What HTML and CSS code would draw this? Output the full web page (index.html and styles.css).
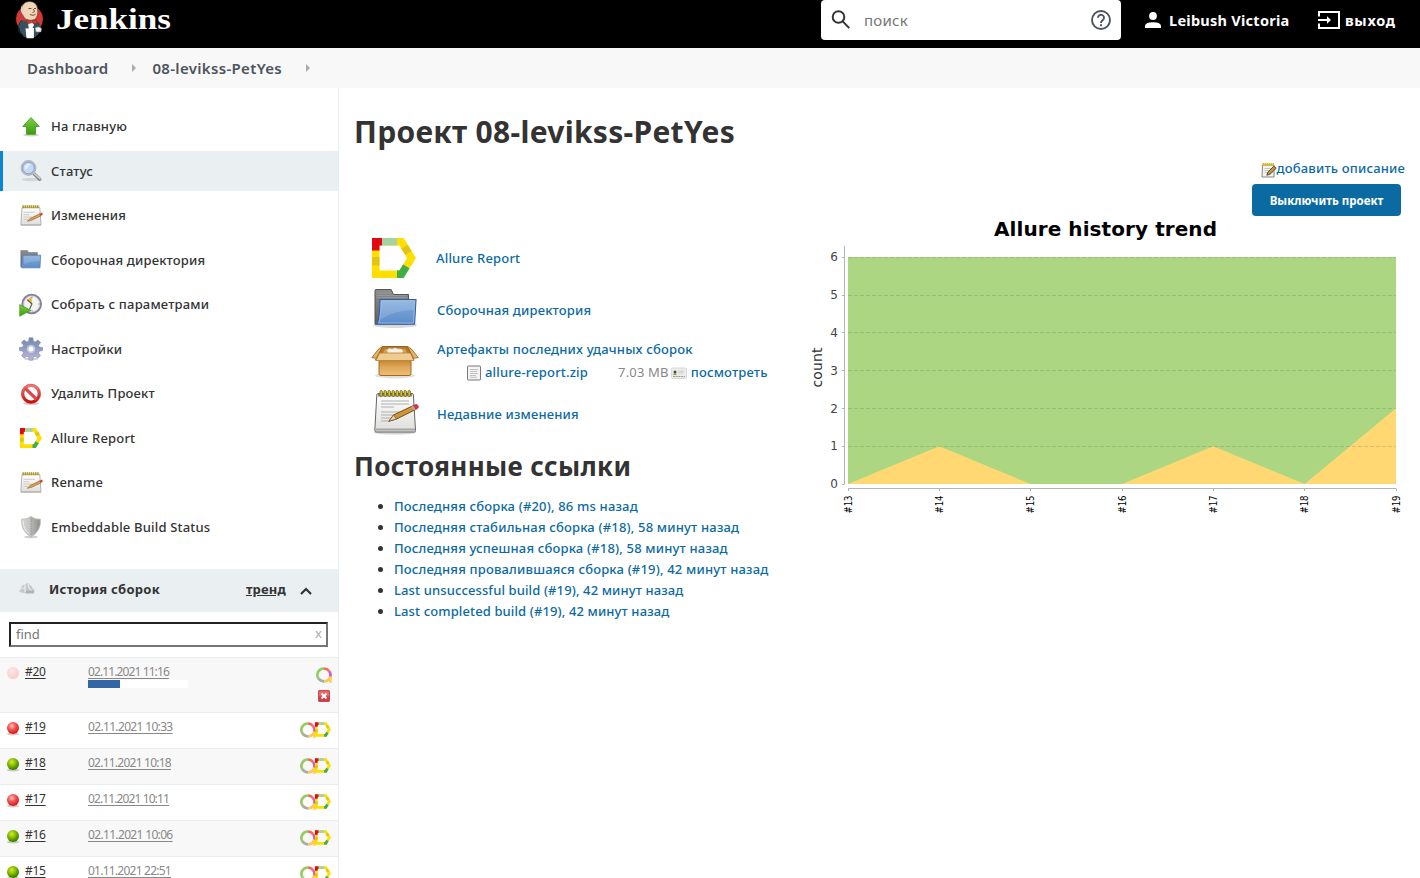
FILE: index.html
```html
<!DOCTYPE html>
<html lang="ru">
<head>
<meta charset="utf-8">
<title>08-levikss-PetYes [Jenkins]</title>
<link rel="stylesheet" href="styles.css">
</head>
<body>
<svg class="sprite" aria-hidden="true">
  <defs>
    <linearGradient id="gGreen" x1="0" y1="0" x2="0" y2="1"><stop offset="0" stop-color="#7ed04a"/><stop offset="1" stop-color="#3d9a0c"/></linearGradient>
    <linearGradient id="gBlue" x1="0" y1="0" x2="0" y2="1"><stop offset="0" stop-color="#86aedd"/><stop offset="1" stop-color="#5b8bc9"/></linearGradient>
    <linearGradient id="gGrey" x1="0" y1="0" x2="0" y2="1"><stop offset="0" stop-color="#8e8e8e"/><stop offset="1" stop-color="#606060"/></linearGradient>
    <linearGradient id="gPaper" x1="0" y1="0" x2="0" y2="1"><stop offset="0" stop-color="#ffffff"/><stop offset="1" stop-color="#dededc"/></linearGradient>
    <linearGradient id="gBox" x1="0" y1="0" x2="0" y2="1"><stop offset="0" stop-color="#bd8129"/><stop offset=".5" stop-color="#dfa75a"/><stop offset="1" stop-color="#efc078"/></linearGradient>
    <linearGradient id="gRed" x1="0" y1="0" x2="0" y2="1"><stop offset="0" stop-color="#ea7a7a"/><stop offset="1" stop-color="#cf0c0c"/></linearGradient>
    <linearGradient id="gGear" x1="0" y1="0" x2="0" y2="1"><stop offset="0" stop-color="#6f87b0"/><stop offset="1" stop-color="#bdb4da"/></linearGradient>
    <linearGradient id="gShield" x1="0" y1="0" x2="1" y2="0"><stop offset="0" stop-color="#d5d5d3"/><stop offset=".5" stop-color="#c2c2c0"/><stop offset=".52" stop-color="#b4b4b1"/><stop offset="1" stop-color="#8e8e8c"/></linearGradient>
    <radialGradient id="bRed" cx=".4" cy=".33" r=".65"><stop offset="0" stop-color="#ffc4c4"/><stop offset=".45" stop-color="#f65a5a"/><stop offset="1" stop-color="#d91919"/></radialGradient>
    <radialGradient id="bGreen" cx=".4" cy=".33" r=".65"><stop offset="0" stop-color="#d6ea30"/><stop offset=".5" stop-color="#86bd00"/><stop offset="1" stop-color="#357d00"/></radialGradient>
    <radialGradient id="bPale" cx=".4" cy=".35" r=".65"><stop offset="0" stop-color="#ffe6e6"/><stop offset="1" stop-color="#f8cccc"/></radialGradient>
  </defs>
  <symbol id="up" viewBox="0 0 24 24">
    <ellipse cx="12" cy="20" rx="8" ry="1.5" fill="#000" opacity=".18"/>
    <path d="M12 2.500 20.300 11.500H16.500V19.300H7.500V11.500H3.700Z" fill="url(#gGreen)" stroke="#4aa01f" stroke-width=".9"/>
  </symbol>
  <symbol id="search" viewBox="0 0 24 24">
    <ellipse cx="12" cy="20.5" rx="9" ry="1.8" fill="#000" opacity=".1"/>
    <path d="M15 14.8 20.8 20.2" stroke="#808080" stroke-width="3.4" stroke-linecap="round"/>
    <path d="M15 14.3 21 19.7" stroke="#cfcfcf" stroke-width="1.6" stroke-linecap="round"/>
    <circle cx="9.5" cy="9" r="7" fill="#b8d3f2" stroke="#b9b9b9" stroke-width="1.9"/>
    <circle cx="9.5" cy="9" r="5.8" fill="#c4daf5" stroke="#7ca2d6" stroke-width="1"/>
    <path d="M5.500 9.500a4.400 4.400 0 0 1 6-4.300L7 10.500Z" fill="#eef5fd" opacity=".8"/>
  </symbol>
  <symbol id="notes" viewBox="0 0 24 24">
    <rect x="2" y="20.2" width="20" height="1.8" fill="#aaa" opacity=".6"/>
    <path d="M3 3.6H20.8L22 20.8H1.8Z" fill="url(#gPaper)" stroke="#a2a2a2" stroke-width=".8"/>
    <path d="M3.4 2.8H20.4" stroke="#ab9524" stroke-width="3" stroke-dasharray="1.5 .6"/>
    <path d="M4.5 8.3H16M4.5 10.7H10M4.5 13.1H13M4.5 15.5H9" stroke="#c8c8c8" stroke-width=".9"/>
    <path d="M8.3 17.3 11.5 14.3 20.8 9.8 22 11.8 12.6 16.3Z" fill="#d9a050" stroke="#8a6020" stroke-width=".6"/>
    <path d="M20.5 9.7 23.3 8.6 23.7 10.7 22 11.8Z" fill="#d83a35"/>
  </symbol>
  <symbol id="folder" viewBox="0 0 24 24">
    <path d="M1.8 18.800V2.600H8.400L9.500 4.500H18.400V18.800Z" fill="url(#gGrey)" stroke="#777" stroke-width=".6"/>
    <path d="M3.8 7.200H21.600L21 19.800H2.600Z" fill="url(#gBlue)" stroke="#5580ba" stroke-width=".8"/>
    <path d="M4.9 8.300H21.100L20.900 13Q13 12.600 5 16Z" fill="#fff" opacity=".14"/>
  </symbol>
  <symbol id="clock" viewBox="0 0 24 24">
    <circle cx="12.700" cy="11" r="9.3" fill="#f4f3ee" stroke="#85809b" stroke-width="2"/>
    <circle cx="12.700" cy="11" r="8" fill="none" stroke="#c7c4d2" stroke-width=".7"/>
    <path d="M8.2 7.2 12.8 10.8V3.5A8 8 0 0 0 8.2 7.2Z" fill="#e5bd42"/>
    <path d="M8 6.7 13 11 10.6 16" fill="none" stroke="#555" stroke-width="1.1"/>
    <path d="M13 3.7V5M13 17V18.5M19 11H20.4" stroke="#999"/>
    <path d="M.7 11.5 12 17.3.7 23.3Z" fill="url(#gGreen)" stroke="#379315" stroke-width=".6"/>
  </symbol>
  <symbol id="gear" viewBox="0 0 24 24">
    <ellipse cx="12" cy="22" rx="7" ry="1.3" fill="#000" opacity=".18"/>
    <path fill="url(#gGear)" stroke="#7183a4" stroke-width=".5" fill-rule="evenodd" d="M10.100.8H13.900L14.400 4.200 16.200 5 19 2.900 21.600 5.500 19.500 8.300 20.200 10.100 23.700 10.600V13.600L20.200 14.200 19.500 16 21.500 18.800 18.800 21.300 16.100 19.300 14.300 20 13.700 23.200H10.300L9.700 20 7.900 19.300 5.200 21.300 2.500 18.800 4.500 16 3.800 14.200.3 13.600V10.600L3.800 10.100 4.500 8.300 2.400 5.500 5 2.900 7.800 5 9.600 4.200ZM12 8.800A3.200 3.200 0 1 0 12 15.200 3.200 3.200 0 1 0 12 8.800Z"/>
    <circle cx="12" cy="12" r="3.8" fill="none" stroke="#d9dbec" stroke-width=".8"/>
  </symbol>
  <symbol id="stop" viewBox="0 0 24 24">
    <ellipse cx="12" cy="21.500" rx="8" ry="1.300" fill="#000" opacity=".2"/>
    <circle cx="12" cy="11.800" r="8.200" fill="#fff" stroke="url(#gRed)" stroke-width="3"/>
    <path d="M6.300 6.300 17.600 17.300" stroke="#dc4646" stroke-width="3.200"/>
    <circle cx="12" cy="11.800" r="9.700" fill="none" stroke="#c52b2b" stroke-width=".5"/>
  </symbol>
  <symbol id="allure" viewBox="0 0 44 40">
    <g fill="none" stroke-width="7.500">
      <path d="M3.750 3.750H29.500L39.500 20 29.500 36.250H3.750Z" stroke="#ffde00"/>
      <path d="M3.750 19V27.500M32.500 8.600 36.400 15" stroke="#e3c50f"/>
      <path d="M3.750 12.500V3.750H10" stroke="#e30613"/>
      <path d="M10 3.750H25" stroke="#a5d2a5"/>
      <path d="M25 36.250H29.500L34.300 28.400" stroke="#3fae49"/>
    </g>
  </symbol>
  <symbol id="shield" viewBox="0 0 24 24">
    <ellipse cx="12" cy="22" rx="7" ry="1.3" fill="#000" opacity=".18"/>
    <path d="M12 1.5Q15.5 4.5 21.3 4.2 22.600 15.500 12 22 1.400 15.500 2.700 4.200 8.500 4.500 12 1.500Z" fill="url(#gShield)" stroke="#b4b4b2" stroke-width=".8"/>
    <path d="M12 3V20.5" stroke="#8d8d8b" stroke-width=".8" stroke-dasharray="1.5 1"/>
    <path d="M4 5.6Q4 14 10 18.700" fill="none" stroke="#f2f2f0" stroke-width=".9"/>
  </symbol>
  <symbol id="folderL" viewBox="0 0 48 48">
    <ellipse cx="24" cy="40" rx="22" ry="3" fill="#000" opacity=".15"/>
    <path d="M4 39V5.500Q4 4.500 5 4.500H20.200L22.500 9.500H37.500V39Z" fill="url(#gGrey)" stroke="#555" stroke-width="1"/>
    <path d="M5.500 8H20.500M5.500 10.500H36M5.500 12.500H36" stroke="#a2a2a2" stroke-width=".6"/>
    <path d="M9 14.500H45L43.600 39.200H5.400Q8.400 37 9 14.500Z" fill="url(#gBlue)" stroke="#34619f" stroke-width="1.1"/>
    <path d="M10.500 16H43.500L43 25Q23 25 9.500 34.500Z" fill="#fff" opacity=".15"/>
    <path d="M10.200 15.800H43.700L42.500 38H7.700Q9.800 33 10.200 15.800Z" fill="none" stroke="#a7c4e8" stroke-width=".7"/>
  </symbol>
  <symbol id="box" viewBox="0 0 48 48">
    <ellipse cx="24" cy="38.500" rx="20" ry="3" fill="#000" opacity=".12"/>
    <path d="M8 22H40V36.500Q40 38.500 38 38.500H10Q8 38.500 8 36.500Z" fill="url(#gBox)" stroke="#a4681b" stroke-width="1"/>
    <path d="M11.500 9.500H36.500L43 23H4.500Z" fill="#b27a2a" stroke="#9b6217"/>
    <path d="M14 12H34L37 17H11Z" fill="#d5a050"/>
    <path d="M16 13Q18 10 21 12 24 10 27 12 31 11 32 14L31 16.500H17Z" fill="#f4f1e8" stroke="#cfc7b2" stroke-width=".5"/>
    <path d="M8.500 16H39.500L42.800 23.500H4.800Z" fill="#efcb94" stroke="#bc822f" stroke-width=".8"/>
    <path d="M11.500 9.500 7.500 12 .8 20.700 5.400 21.200ZM36.500 9.500 40.500 12 47.400 20.700 42.600 21.200Z" fill="#e6b56c" stroke="#9b6217" stroke-width=".8"/>
  </symbol>
  <symbol id="notesL" viewBox="0 0 48 48">
    <ellipse cx="24" cy="43.500" rx="21" ry="2" fill="#000" opacity=".17"/>
    <path d="M7 4.500H41Q42.300 4.500 42.400 6L44.500 41.500Q44.500 43 43.500 43H5Q3.800 43 3.800 41.500L5.800 6Q5.900 4.500 7 4.500Z" fill="url(#gPaper)" stroke="#656565" stroke-width="1"/>
    <path d="M7 5H41V7.500H7Z" fill="#8c8c8c"/>
    <path d="M4.500 40.400H44" stroke="#a5a5a5" stroke-width="2"/>
    <g fill="#e0cd35" stroke="#66560a" stroke-width=".8"><rect x="9" y="1.500" width="2.400" height="6" rx="1.200"/><rect x="13" y="1.500" width="2.400" height="6" rx="1.200"/><rect x="17" y="1.500" width="2.400" height="6" rx="1.200"/><rect x="21" y="1.500" width="2.400" height="6" rx="1.200"/><rect x="25" y="1.500" width="2.400" height="6" rx="1.200"/><rect x="29" y="1.500" width="2.400" height="6" rx="1.200"/><rect x="33" y="1.500" width="2.400" height="6" rx="1.200"/><rect x="37" y="1.500" width="2.400" height="6" rx="1.200"/></g>
    <path d="M10 12H38M10 15H38M10 18H23M10 23H34M10 26H28M10 29H22M10 32H17" stroke="#aeb0ae" stroke-width="1"/>
    <path d="M17.800 32.300 22.500 26 42.500 16.500 44.700 20.500 25.500 30Z" fill="#d0953a" stroke="#65430e" stroke-width=".9"/>
    <path d="M17.800 32.300 22.500 26 25.500 30Z" fill="#ecd3a7" stroke="#65430e" stroke-width=".6"/>
    <path d="M42 16.500 45.500 15.300Q48 16.500 47.200 19L44.500 20.700Z" fill="#e0353a" stroke="#8b2323" stroke-width=".5"/>
    <path d="M40.500 17.200 42.300 16.400 44.700 20.600 43 21.500Z" fill="#aaa"/>
  </symbol>
  <symbol id="doc" viewBox="0 0 16 16">
    <rect x="1.500" y="1" width="13" height="14" rx=".8" fill="#f4f4f3" stroke="#777" stroke-width="1"/>
    <path d="M4 4.500H12M4 6.500H11M4 8.500H12M4 10.500H10M4 12.300H11" stroke="#b4b4b4" stroke-width=".8"/>
  </symbol>
  <symbol id="card" viewBox="0 0 16 16">
    <rect x=".5" y="3" width="15" height="10.500" rx="1" fill="#ececea" stroke="#d8d8d6"/>
    <circle cx="4" cy="7" r="1.500" fill="#4d4b22"/><path d="M1.800 9.800Q4 7 6 9.800Z" fill="#71872b"/>
    <path d="M7.500 6.300H13M7.500 8H12" stroke="#c0c0c0" stroke-width=".8"/><path d="M2 11.500H14" stroke="#999" stroke-dasharray="2 .7"/>
  </symbol>
  <symbol id="edit" viewBox="0 0 16 16">
    <path d="M1.500 3H13V15H1Z" fill="#f3f3f1" stroke="#777" stroke-width=".9"/>
    <path d="M1.500 2.500H13" stroke="#d6bd1f" stroke-width="3" stroke-dasharray="1.5 .5"/>
    <path d="M3.500 6.500H10M3.500 8.500H8M3.500 10.500H7" stroke="#bbb" stroke-width=".8"/>
    <path d="M5.800 13.300 7 10 12.800 4.200 15.200 6.200 9.300 12Z" fill="#bf954c" stroke="#4d4020" stroke-width=".9"/>
  </symbol>
  <symbol id="trend" viewBox="0 0 16 16">
    <path d="M.5 11Q.3 8.500 2 7.800 3 3 6 3.800 8.500.5 11 4 13 4.300 13.200 7 15.800 8 15.500 11.500L8 12.500Z" fill="#c6c8c9"/>
    <path d="M6 4V11M9 3 10.500 8 15 11M2.500 8 6 6.500" stroke="#eff0f0" stroke-width="1" fill="none"/>
    <path d="M7 9.500H15V12.500H7Z" fill="#b0b2b3"/>
  </symbol>
  <symbol id="ring" viewBox="0 0 16 16">
    <g fill="none" stroke-width="2.700">
      <path d="M8 1.500A6.400 6.400 0 0 0 2.600 11.600" stroke="#97cc64"/>
      <path d="M2.600 11.600A6.400 6.400 0 0 0 8.500 14.300" stroke="#aaa"/>
      <path d="M8.500 14.300A6.400 6.400 0 0 0 14.200 10" stroke="#ffc657"/>
      <path d="M8 1.500A6.400 6.400 0 0 1 13 4" stroke="#fd6650"/>
      <path d="M13 4A6.400 6.400 0 0 1 14.200 10" stroke="#d35ebe"/>
      <path d="M14.500 9.500V15.800" stroke="#ffd050"/>
    </g>
  </symbol>
  <symbol id="ballRed" viewBox="0 0 16 16"><ellipse cx="8" cy="14" rx="6" ry="1.500" fill="#000" opacity=".2"/><circle cx="8" cy="8" r="6" fill="url(#bRed)"/></symbol>
  <symbol id="ballGreen" viewBox="0 0 16 16"><ellipse cx="8" cy="14" rx="6" ry="1.500" fill="#000" opacity=".2"/><circle cx="8" cy="8" r="6" fill="url(#bGreen)"/></symbol>
  <symbol id="ballPale" viewBox="0 0 16 16"><circle cx="8" cy="8" r="6" fill="url(#bPale)"/></symbol>
</svg>

<header class="header">
  <a class="brand">
    <svg class="butler" viewBox="0 0 30 40">
      <circle cx="14.500" cy="19" r="13.400" fill="#d33833"/>
      <path d="M4.500 30Q3.600 22 6.500 20L13 21.500 19 20 24.500 23 26 31 23 34.500 20 37H9L6 33Z" fill="#35505e"/>
      <path d="M6.500 20.500Q2.500 24 4 32L8 35" fill="none" stroke="#1c2a32" stroke-width="1"/>
      <path d="M6.700 13Q5.500 2 14 1.500 22 1.500 22.500 9 23.500 16.500 19.500 19.500 13 21.500 9.500 18Z" fill="#f0d6b7" stroke="#5c4a3e" stroke-width=".6"/>
      <path d="M6.300 12Q5 8 7 5.500L8.400 10 8 15Z" fill="#d9d4c8"/>
      <path d="M13.500 8.500H16.500M19 8.500H21M15 14.500Q18 16.500 20.500 14.300M18 9Q21 12 17.500 12.500" fill="none" stroke="#5c3e32" stroke-width=".9"/>
      <path d="M12.500 21H17L19 25 17 29H14Z" fill="#fff"/>
      <path d="M12 19.500 16.500 21.500 21.500 19.500 21.800 24 16.500 22.800 12.500 24.300Z" fill="#d33833" stroke="#7a1c1a" stroke-width=".4"/>
      <path d="M10.500 28.500 19 28 18.800 38.300H11.500Z" fill="#fff"/>
      <path d="M20 28Q24 25.500 26.500 28.500L26 32H21Z" fill="#f4f1ee" stroke="#6a6a6a" stroke-width=".5"/>
    </svg>
    <svg class="wordmark" viewBox="0 0 118 40"><text x="0" y="28.500" textLength="115" lengthAdjust="spacingAndGlyphs">Jenkins</text></svg>
  </a>
  <div class="search">
    <svg class="search-lens" viewBox="0 0 24 24"><circle cx="9.500" cy="9" r="5.800"/><path d="M13.700 13.400 20.300 20.100"/></svg>
    <span class="search-text">поиск</span>
    <svg class="search-help" viewBox="0 0 24 24"><circle cx="12" cy="12" r="9"/><path d="M9 9.800A3 3 0 1 1 13.800 12.100Q12 13.300 12 15"/><path d="M12 16.300V18.200"/></svg>
  </div>
  <a class="user"><svg class="user-icon" viewBox="0 0 16 16"><circle cx="8" cy="4" r="3.900"/><path d="M0 16V14Q0 10.200 8 10.200 16 10.200 16 14V16Z"/></svg><span>Leibush Victoria</span></a>
  <a class="logout"><svg class="logout-icon" viewBox="0 0 22 20"><path d="M1 6.500V2H21V18H1V13.500"/><path d="M0 10H10"/><path d="M9 6.300 13 10 9 13.700Z" class="tip"/></svg><span>выход</span></a>
</header>

<nav class="crumbs">
  <a>Dashboard</a><i class="crumb-sep"></i><a class="crumb-project">08-levikss-PetYes</a><i class="crumb-sep"></i>
</nav>

<div class="page">
  <aside class="side">
    <ul class="tasks">
      <li class="task"><svg><use href="#up"/></svg><span>На главную</span></li>
      <li class="task active"><svg><use href="#search"/></svg><span>Статус</span></li>
      <li class="task"><svg><use href="#notes"/></svg><span>Изменения</span></li>
      <li class="task"><svg><use href="#folder"/></svg><span>Сборочная директория</span></li>
      <li class="task"><svg><use href="#clock"/></svg><span>Собрать с параметрами</span></li>
      <li class="task"><svg><use href="#gear"/></svg><span>Настройки</span></li>
      <li class="task"><svg><use href="#stop"/></svg><span>Удалить Проект</span></li>
      <li class="task"><svg class="allure-s"><use href="#allure"/></svg><span>Allure Report</span></li>
      <li class="task"><svg><use href="#notes"/></svg><span>Rename</span></li>
      <li class="task"><svg><use href="#shield"/></svg><span>Embeddable Build Status</span></li>
    </ul>
    <section class="history">
      <div class="history-head">
        <svg class="trend-icon"><use href="#trend"/></svg>
        <b class="history-title">История сборок</b>
        <a class="trend-link">тренд</a>
        <svg class="chevron" viewBox="0 0 12 8"><path d="M1 7 6 2 11 7"/></svg>
      </div>
      <div class="find"><span>find</span><span class="find-x">x</span></div>
      <div class="build running">
        <svg class="ball"><use href="#ballPale"/></svg><a class="num">#20</a>
        <div class="when"><a class="date ones">02.11.2021 11:16</a><div class="bar"><div class="bar-fill" style="width:32%"></div></div></div>
        <div class="badges stack"><svg class="badge"><use href="#ring"/></svg><svg class="cancel" viewBox="0 0 12 12"><rect x=".5" y=".5" width="11" height="11" rx=".6" fill="#e06a6e" stroke="#c94a50"/><path d="M1 6.500H11V11H1Z" fill="#d33c42"/><path d="M3.500 3.500 8.500 8.500M8.500 3.500 3.500 8.500" stroke="#fff" stroke-width="1.800"/></svg></div>
      </div>
      <div class="build"><svg class="ball"><use href="#ballRed"/></svg><a class="num">#19</a><div class="when"><a class="date">02.11.2021 10:33</a></div><div class="badges"><svg class="badge"><use href="#ring"/></svg><svg class="badge-a"><use href="#allure"/></svg></div></div>
      <div class="build alt"><svg class="ball"><use href="#ballGreen"/></svg><a class="num">#18</a><div class="when"><a class="date one">02.11.2021 10:18</a></div><div class="badges"><svg class="badge"><use href="#ring"/></svg><svg class="badge-a"><use href="#allure"/></svg></div></div>
      <div class="build"><svg class="ball"><use href="#ballRed"/></svg><a class="num">#17</a><div class="when"><a class="date ones">02.11.2021 10:11</a></div><div class="badges"><svg class="badge"><use href="#ring"/></svg><svg class="badge-a"><use href="#allure"/></svg></div></div>
      <div class="build alt"><svg class="ball"><use href="#ballGreen"/></svg><a class="num">#16</a><div class="when"><a class="date">02.11.2021 10:06</a></div><div class="badges"><svg class="badge"><use href="#ring"/></svg><svg class="badge-a"><use href="#allure"/></svg></div></div>
      <div class="build"><svg class="ball"><use href="#ballGreen"/></svg><a class="num">#15</a><div class="when"><a class="date one">01.11.2021 22:51</a></div><div class="badges"><svg class="badge"><use href="#ring"/></svg><svg class="badge-a"><use href="#allure"/></svg></div></div>
    </section>
  </aside>

  <main class="main">
    <h1>Проект 08-levikss-PetYes</h1>
    <div class="cols">
      <div class="left">
        <div class="item"><svg class="allure-l"><use href="#allure"/></svg><a>Allure Report</a></div>
        <div class="item"><svg><use href="#folderL"/></svg><a>Сборочная директория</a></div>
        <div class="item"><svg><use href="#box"/></svg>
          <div class="artifacts">
            <a>Артефакты последних удачных сборок</a>
            <div class="file"><svg><use href="#doc"/></svg><a class="file-name">allure-report.zip</a><span class="size">7.03 MB</span><svg><use href="#card"/></svg><a class="view">посмотреть</a></div>
          </div>
        </div>
        <div class="item"><svg><use href="#notesL"/></svg><a>Недавние изменения</a></div>
        <h2>Постоянные ссылки</h2>
        <ul class="links">
          <li><a>Последняя сборка (#20), 86 ms назад</a></li>
          <li><a>Последняя стабильная сборка (#18), 58 минут назад</a></li>
          <li><a>Последняя успешная сборка (#18), 58 минут назад</a></li>
          <li><a>Последняя провалившаяся сборка (#19), 42 минут назад</a></li>
          <li class="latin"><a>Last unsuccessful build (#19), 42 минут назад</a></li>
          <li class="latin"><a>Last completed build (#19), 42 минут назад</a></li>
        </ul>
      </div>
      <div class="right">
        <div class="describe"><svg><use href="#edit"/></svg><a>добавить описание</a></div>
        <button class="disable">Выключить проект</button>
        <svg class="chart" viewBox="808 216 597 304">
          <text class="c-title" x="994" y="236" textLength="223">Allure history trend</text>
          <path d="M848 257H1396V484H848Z" fill="#add683"/>
          <path d="M848 484 939.300 446.200 1030.700 484ZM1122 484 1213.300 446.200 1304.700 484 1396 408.300V484Z" fill="#ffd873"/>
          <path class="c-grid" d="M848 257.500H1396M848 295.500H1396M848 332.500H1396M848 370.500H1396M848 408.500H1396M848 446.500H1396"/>
          <path class="c-axis" d="M844.500 246V484.500M842 257.500H844M842 295.500H844M842 332.500H844M842 370.500H844M842 408.500H844M842 446.500H844M842 484.500H844M848 488.500H1396.500M848.500 489V491M939.500 489V491M1030.500 489V491M1122.500 489V491M1213.500 489V491M1304.500 489V491M1396.500 489V491"/>
          <g class="c-y"><text x="838" y="261">6</text><text x="838" y="299">5</text><text x="838" y="337">4</text><text x="838" y="375">3</text><text x="838" y="413">2</text><text x="838" y="450">1</text><text x="838" y="488">0</text></g>
          <g class="c-x"><text textLength="18" lengthAdjust="spacingAndGlyphs" transform="translate(851.500 513.500) rotate(-90)">#13</text><text textLength="18" lengthAdjust="spacingAndGlyphs" transform="translate(943 513.500) rotate(-90)">#14</text><text textLength="18" lengthAdjust="spacingAndGlyphs" transform="translate(1034 513.500) rotate(-90)">#15</text><text textLength="18" lengthAdjust="spacingAndGlyphs" transform="translate(1125.500 513.500) rotate(-90)">#16</text><text textLength="18" lengthAdjust="spacingAndGlyphs" transform="translate(1217 513.500) rotate(-90)">#17</text><text textLength="18" lengthAdjust="spacingAndGlyphs" transform="translate(1308 513.500) rotate(-90)">#18</text><text textLength="18" lengthAdjust="spacingAndGlyphs" transform="translate(1399.500 513.500) rotate(-90)">#19</text></g>
          <text class="c-count" transform="translate(822 387.500) rotate(-90)" textLength="40">count</text>
        </svg>
      </div>
    </div>
  </main>
</div>
</body>
</html>
```
FILE: styles.css
```css
* { box-sizing: border-box; }
body { margin: 0; height: 878px; overflow: hidden; background: #fff; color: #333; font: 500 13px/21px "Noto Sans", "Open Sans", sans-serif; letter-spacing: .18px; display: flex; flex-direction: column; }
.sprite { position: absolute; width: 0; height: 0; }
ul { margin: 0; padding: 0; }
svg { flex: none; display: block; letter-spacing: 0; }
a, span, b { white-space: nowrap; }
h1, h2 { margin: 0; font-weight: 700; white-space: nowrap; }

.header { height: 48px; flex: none; background: #000; display: flex; align-items: flex-start; color: #fff; }
.brand { display: flex; width: 821px; padding-left: 15px; }
.butler { width: 30px; height: 40px; }
.wordmark { width: 118px; height: 40px; margin-left: 11px; }
.wordmark text { font: bold 30px "Liberation Serif", serif; fill: #fff; }
.search { width: 300px; height: 40px; background: #fff; border-radius: 4px; display: flex; align-items: center; padding: 0 8px; color: #757575; font-size: 15px; font-weight: 400; letter-spacing: .26px; }
.search-lens { width: 24px; height: 24px; fill: none; stroke: #333; stroke-width: 2; }
.search-text { margin-left: 11px; flex: 1; }
.search-help { width: 24px; height: 24px; fill: none; stroke: #4d545d; stroke-width: 1.9; }
.user, .logout { height: 40px; display: flex; align-items: center; font-size: 14.5px; font-weight: 700; letter-spacing: .27px; }
.user { margin-left: 24px; width: 145px; }
.user-icon { width: 16px; height: 16px; fill: #fff; margin-right: 8px; }
.logout { margin-left: 28px; letter-spacing: .7px; }
.logout-icon { width: 22px; height: 20px; fill: none; stroke: #fff; stroke-width: 2; margin-right: 5px; }
.logout-icon .tip { fill: #fff; stroke: none; }

.crumbs { height: 40px; flex: none; background: #f8f8f8; display: flex; align-items: center; padding: 0 0 0 27px; font-size: 15px; font-weight: 600; color: #4d545d; }
.crumb-project { letter-spacing: .33px; }
.crumb-sep { border: 4px solid transparent; border-left-color: #aaa; border-right: 0; margin: 0 16px 0 24px; }

.page { display: flex; flex: 1; min-height: 0; }
.side { width: 339px; border-right: 1px solid #e6eef1; padding-top: 18.9px; flex: none; overflow: hidden; }
.tasks { list-style: none; display: grid; gap: 4.5px; }
.task { height: 40px; display: flex; align-items: center; gap: 8px; padding-left: 19px; }
.task svg { width: 24px; height: 24px; }
.task .allure-s { width: 22px; height: 20px; margin: 0 1px; }
.task.active { background: #eaeff2; border-left: 3px solid #0b85d6; padding-left: 16px; }
.history { margin-top: 21.6px; }
.history-head { height: 43px; background: #eaeff2; display: flex; align-items: center; padding: 0 26px 2px 19px; }
.trend-icon { width: 16px; height: 16px; }
.history-title { margin-left: 14px; font-weight: 700; letter-spacing: .27px; flex: 1; }
.trend-link { text-decoration: underline; font-weight: 700; }
.chevron { width: 12px; height: 8px; margin: 3px 0 0 14px; fill: none; stroke: #333; stroke-width: 2.2; }
.find { margin: 10px 10px 10px 9px; height: 25px; border: 2px solid #767676; border-color: #222 #767676 #767676 #222; display: flex; align-items: center; justify-content: space-between; padding: 1px 4px 0 5px; color: #757575; font-weight: 400; letter-spacing: 0; }
.find-x { color: #aaa; padding-bottom: 2px; }
.build { height: 36px; border-top: 1px solid #e9eef1; display: flex; align-items: flex-start; font-size: 12px; font-weight: 400; line-height: 16px; padding: 6px 6px 0 5px; letter-spacing: -.3px; }
.build.alt, .build.running { background: #f8f8f8; }
.build.running { height: 55px; }
.ball { width: 16px; height: 16px; margin-top: 1px; }
.num { margin-left: 4px; width: 63px; }
.num, .date { text-decoration: underline; text-underline-offset: 2px; }
.when { flex: 1; }
.date { display: block; color: #888; letter-spacing: -.66px; }
.date.one { letter-spacing: -.76px; }
.date.ones { letter-spacing: -.89px; }
.bar { width: 100px; height: 8px; background: #fff; }
.bar-fill { height: 8px; background: #3465a4; }
.badges { display: flex; padding: 3px 1px 0 0; }
.badge { width: 16px; height: 16px; }
.badge-a { width: 16px; height: 15px; margin-left: -1px; }
.badges.stack { flex-direction: column; align-items: center; gap: 7px; padding-right: 0; }
.cancel { width: 12px; height: 12px; }

.main { flex: 1; padding: 18px 15px 0 15px; }
.main h1 { font-size: 30px; line-height: 52px; height: 51px; letter-spacing: .3px; }
.cols { display: flex; }
.left { width: 454px; padding-top: 75px; }
.left a, .describe a { color: #0b6aa2; }
.item { height: 52px; display: flex; align-items: center; padding-left: 17px; }
.item > svg { width: 48px; height: 48px; margin: 0 18px 2px 0; }
.item > .allure-l { width: 44px; height: 40px; margin: 0 20px 1px 1px; }
.artifacts { line-height: 23px; padding-bottom: 2px; }
.file { display: flex; align-items: center; padding-left: 29px; }
.file svg { width: 16px; height: 16px; margin-top: 1px; }
.file-name { margin: 0 30px 0 3px; }
.size { color: #888; font-weight: 400; margin-right: 2px; }
.view { margin-left: 4px; }
.left h2 { font-size: 26px; line-height: 36px; margin-top: 8px; letter-spacing: .36px; }
.links { padding: 12px 0 0 40px; }
.links .latin { letter-spacing: .12px; }
.right { display: flex; flex-direction: column; align-items: flex-end; width: 597px; }
.describe { display: flex; align-items: center; height: 22px; }
.describe svg { width: 16px; height: 16px; margin-top: 3px; }
.disable { font: 700 11.5px/20px "Noto Sans", sans-serif; letter-spacing: 0; color: #fff; background: #0b6aa2; border: 0; border-radius: 4px; width: 149px; height: 32px; padding: 2px 0 0; margin: 5px 4px 0 0; }
.chart { width: 597px; height: 304px; }
.c-title { font: bold 20px "DejaVu Sans", sans-serif; }
.c-grid { stroke: #000; stroke-opacity: .12; stroke-dasharray: 4 2; fill: none; }
.c-axis { stroke: #b4b4b4; fill: none; }
.c-y { font: 12px "DejaVu Sans", sans-serif; fill: #444; text-anchor: end; }
.c-x { font: 10px "DejaVu Sans", sans-serif; }
.c-count { font: 14px "DejaVu Sans", sans-serif; fill: #333; }
```
